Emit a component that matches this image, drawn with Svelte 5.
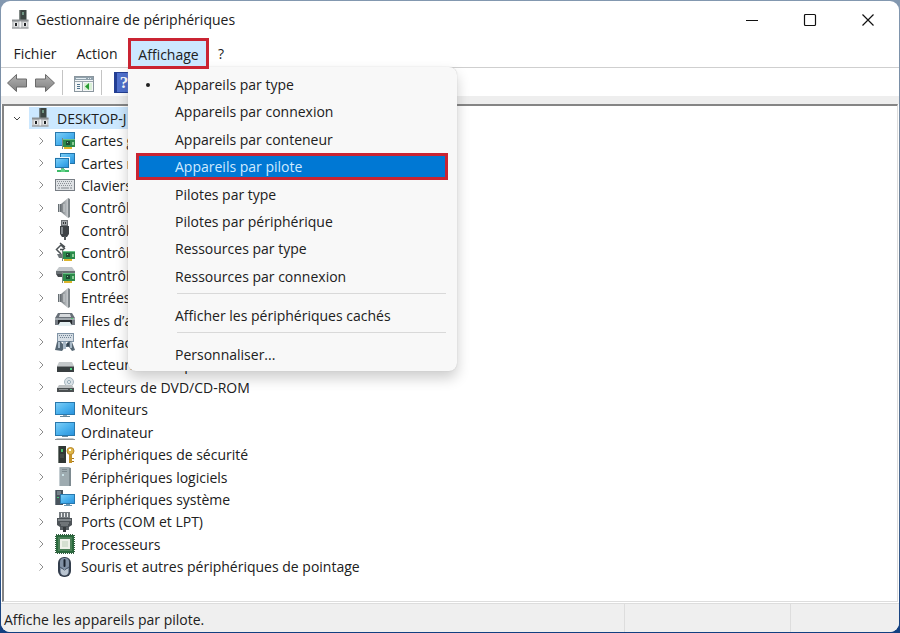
<!-- DeviceManager.svelte -->
<script lang="ts">
  interface Device {
    icon: string;
    label: string;
  }

  const devices: Device[] = [
    { icon: "display", label: "Cartes graphiques" },
    { icon: "network", label: "Cartes réseau" },
    { icon: "keyboard", label: "Claviers" },
    { icon: "speaker", label: "Contrôleurs audio" },
    { icon: "usb", label: "Contrôleurs USB" },
    { icon: "storage", label: "Contrôleurs" },
    { icon: "ide", label: "Contrôleurs IDE" },
    { icon: "speaker", label: "Entrées audio" },
    { icon: "printer", label: "Files d’attente" },
    { icon: "hid", label: "Interfaces" },
    { icon: "disk", label: "Lecteurs de disque" },
    { icon: "dvd", label: "Lecteurs de DVD/CD-ROM" },
    { icon: "monitor", label: "Moniteurs" },
    { icon: "computer", label: "Ordinateur" },
    { icon: "security", label: "Périphériques de sécurité" },
    { icon: "software", label: "Périphériques logiciels" },
    { icon: "system", label: "Périphériques système" },
    { icon: "ports", label: "Ports (COM et LPT)" },
    { icon: "cpu", label: "Processeurs" },
    { icon: "mouse", label: "Souris et autres périphériques de pointage" },
  ];

  const views = [
    "Appareils par type",
    "Appareils par connexion",
    "Appareils par conteneur",
    "Appareils par pilote",
    "Pilotes par type",
    "Pilotes par périphérique",
    "Ressources par type",
    "Ressources par connexion",
  ];

  let current = $state(0);
  let highlighted = $state(3);
</script>

<svelte:head>
  <title>Gestionnaire de périphériques</title>
</svelte:head>

{#snippet chip()}
  <path d="M9 9h12v8H9z" fill="#2c8a4b" />
  <path d="M9 9h12v1H9z" fill="#6cc088" />
  <rect x="12" y="11" width="4" height="4" fill="#1d4a33" />
  <path d="M13 12h1v1h-1z" fill="#8fd0a0" />
  <path d="M18 12h2v3h-2z" fill="#8ccf98" />
  <path d="M10 17h8v2h-8z" fill="#dcb52c" />
  <path d="M8 8h1v11H8z" fill="#7a8882" />
{/snippet}

{#snippet hub()}
  <svg class="icon" viewBox="0 0 22 22" aria-hidden="true">
    <rect x="10.500" y="1" width="7" height="10" fill="#3c4642" />
    <rect x="13" y="3" width="2" height="3" fill="#6f9482" />
    <path d="M10.500 1h1v10h-1z" fill="#68736e" />
    <path d="M3 11h16.500v8.500H3z" fill="#c6c8ca" />
    <path d="M3 10.500h16.500v2H3z" fill="#8b8f92" />
    <path d="M3 18.500h16.500v1H3z" fill="#8b8f92" />
    <path d="M10.500 12.500h1.500v6h-1.500z" fill="#f1f2f3" />
    <path d="M5 13.500h4v4H5zM14 13.500h4v4h-4z" fill="#eceded" />
    <path d="M6 14h2v3H6zM15 14h2v3h-2z" fill="#202326" />
  </svg>
{/snippet}

{#snippet deviceIcon(name: string)}
  <svg class="icon" viewBox="0 0 22 22" aria-hidden="true">
    {#if name === "display"}
      <rect x="1" y="2" width="20" height="14" fill="#2878ad" />
      <path d="M2 3h18v12H2z" fill="url(#screen)" />
      {@render chip()}
    {:else if name === "network"}
      <rect x="6" y="1" width="15" height="11" fill="#2375aa" />
      <rect x="7" y="2" width="13" height="9" fill="url(#screen)" />
      <rect x="1" y="5" width="15" height="11" fill="#f2f9fd" />
      <rect x="1" y="6" width="14" height="10" fill="#2375aa" />
      <rect x="2" y="7" width="12" height="8" fill="url(#screen)" />
      <path d="M7 16h3v2H7z" fill="#6fae86" />
      <path d="M3 18h12v2H3z" fill="#3dbb68" />
      <path d="M7 17h4v3H7z" fill="#62d488" />
    {:else if name === "keyboard"}
      <rect x="1" y="5" width="20" height="12" fill="#777d84" />
      <rect x="2" y="6" width="18" height="10" fill="#dfe2e5" />
      <path
        d="M3 7.500h16M4 9.500h14M3 11.500h16"
        stroke="#8a9096"
        stroke-dasharray="1 1"
      />
      <path d="M4 14h2M7 14h8M16 14h2" stroke="#81878d" />
    {:else if name === "speaker"}
      <path d="M4 7h4v8H4z" fill="#666d72" />
      <path d="M5 7h1v8H5z" fill="#b5babd" />
      <path d="M7 7l7-6v20l-7-6z" fill="url(#metal)" />
      <path d="M14 1l2 1v18l-2 1z" fill="#7f868a" />
      <path d="M10 7v8" stroke="#d2d5d7" />
    {:else if name === "usb"}
      <path d="M7 1h7v6H7z" fill="#6b7073" />
      <path d="M8 2h5v4H8z" fill="#a4a8aa" />
      <path d="M9 3h1v2H9zM11 3h1v2h-1z" fill="#35393b" />
      <path d="M6 7h9v8l-2 3H8l-2-3z" fill="#3e4346" />
      <path d="M7 8h2v7H7z" fill="#858b8f" />
      <path d="M10 17h2v4h-2z" fill="#555b5e" />
    {:else if name === "storage"}
      <path
        d="M11 7L7 3 2.500 7.500 7 12M6 1l5 4M6 7.500h4"
        fill="none"
        stroke="#4b5154"
        stroke-width="1.500"
      />
      <path d="M3 12h6v4H5z" fill="#6e7679" />
      {@render chip()}
    {:else if name === "ide"}
      <path d="M5 3h13l3 4H2z" fill="#c3c7ca" />
      <path d="M2 7h19v3H2z" fill="#6a7175" />
      <path d="M2 10h7v3H4z" fill="#43494c" />
      {@render chip()}
    {:else if name === "printer"}
      <path d="M4 4h14l3 5H1z" fill="#687078" />
      <path d="M6 5h10l1 3H5z" fill="#d6dadd" />
      <path d="M1 9h20v7H1z" fill="#737a81" />
      <path d="M1 9h20v2H1z" fill="#a0a7ad" />
      <path d="M4 11h14v4H4z" fill="#24292d" />
      <path d="M6 13h10l2 4H4z" fill="#e4eff1" />
      <path d="M17 9h2v1h-2z" fill="#57cb74" />
    {:else if name === "hid"}
      <rect x="3" y="2" width="17" height="9" fill="#8094a6" />
      <path d="M4 3h15v7H4z" fill="#d6dee5" />
      <path d="M5 4.500h13M6 6.500h11" stroke="#6f8293" stroke-dasharray="1 1" />
      <path d="M1 19l2-8 3-1 3 3h3l3-3 3 1 3 8-3 1-3-4h-4l-3 4z" fill="#566774" />
      <path d="M4 11h2v6H4zM9 11h3v7H9zM16 11h2v6h-2z" fill="#a7b8c6" />
      <path d="M13 12h2v3h-2z" fill="#334552" />
    {:else if name === "disk"}
      <path d="M5 8h13l2 4H3z" fill="#c5c9cb" />
      <rect x="3" y="12" width="17" height="6" fill="#393f41" />
      <path d="M3 12h17v1H3z" fill="#85898b" />
      <path d="M16 14h2v2h-2z" fill="#4fd080" />
    {:else if name === "dvd"}
      <circle cx="15" cy="6" r="4.500" fill="#dbe3e8" stroke="#a9b8c1" />
      <circle cx="15" cy="6" r="1.500" fill="#fff" stroke="#91a7b4" />
      <path d="M5 9h13l2 3H3z" fill="#bbbfc1" />
      <rect x="3" y="12" width="17" height="4" fill="#4b5052" />
      <path d="M5 13.500h9" stroke="#8d9294" />
      <path d="M16 13h2v1h-2z" fill="#67c791" />
    {:else if name === "monitor"}
      <rect x="1" y="3" width="20" height="13" fill="#2878ad" />
      <rect x="2" y="4" width="18" height="11" fill="url(#screen)" />
      <path d="M9 16h4v1H9z" fill="#8aa3b1" />
      <path d="M6 17h10v1H6z" fill="#64869a" />
    {:else if name === "computer"}
      <rect x="1" y="1" width="20" height="14" fill="#2878ad" />
      <rect x="2" y="2" width="18" height="12" fill="url(#screen)" />
      <path d="M8 15h6v1H8z" fill="#688ba2" />
      <path d="M3 17h16l2 2H1z" fill="#c4c9cd" />
      <path d="M1 18h20v1H1z" fill="#8f969b" />
    {:else if name === "security"}
      <rect x="4" y="2" width="8" height="17" fill="#303735" />
      <path d="M4 2h1v17H4z" fill="#747c77" />
      <path d="M7 5h2v3H7z" fill="#4cc16b" />
      <path d="M6 11h4M6 13h4" stroke="#555d59" />
      <path d="M15 10h3v9h-3z" fill="#c69427" />
      <circle cx="16.500" cy="7" r="3.500" fill="#dfb84b" stroke="#b8862b" />
      <path d="M15 5h2v2h-2z" fill="#fff" />
      <path d="M18 14h2v1h-2zM18 17h2v1h-2z" fill="#a8771d" />
    {:else if name === "software"}
      <path d="M6 1h9l2 1v18H5V2z" fill="#9eabb0" />
      <path d="M5 2h1v18H5z" fill="#c4cdd1" />
      <path d="M15 2h2v18h-2z" fill="#7e8b91" />
      <path d="M8 3.500h5M8 5.500h5" stroke="#7e8b91" />
      <path d="M8 8h2v2H8z" fill="#c9e1e6" />
    {:else if name === "system"}
      <path d="M1 2h8v15H1z" fill="#49545d" />
      <path d="M1 2h1v15H1z" fill="#7a868e" />
      <path d="M3 4h4M3 6h4" stroke="#a4afb6" />
      <path d="M3 9h2v1H3z" fill="#45cc78" />
      <rect x="6" y="6" width="15" height="10" fill="#2878ad" />
      <rect x="7" y="7" width="13" height="8" fill="url(#screen)" />
      <path d="M12 16h4v1h-4zM10 17h8v1h-8z" fill="#6a96b1" />
    {:else if name === "ports"}
      <path d="M5 1h11v6H5z" fill="#777d81" />
      <path d="M7.500 2v4M10.500 2v4M13.500 2v4" stroke="#eef0f1" />
      <path d="M3 7h15v7l-3 2H6l-3-2z" fill="#4d5357" />
      <path d="M4 8h13v2H4z" fill="#81878b" />
      <path d="M6 12h9M7 14h7" stroke="#92979a" />
      <path d="M6 16h3v3H6zM12 16h3v3h-3z" fill="#5b6165" />
      <path d="M9 16h3v5H9z" fill="#353a3d" />
    {:else if name === "cpu"}
      <rect
        x="2"
        y="2"
        width="18"
        height="18"
        fill="#286c3c"
        stroke="#315f40"
        stroke-width="2"
        stroke-dasharray="1 1"
      />
      <rect x="4" y="4" width="14" height="14" fill="#4b8058" />
      <rect x="6" y="6" width="10" height="10" fill="#eef0e9" />
      <path d="M8 8h6v6H8z" fill="#d5dfd1" />
    {:else if name === "mouse"}
      <rect x="4" y="1" width="13" height="20" rx="6" fill="#343e4d" />
      <rect x="6" y="2" width="9" height="17" rx="4" fill="#8090a4" />
      <path d="M7 13h7v3a3 3 0 0 1-7 0z" fill="#bac5d1" />
      <rect x="9.500" y="3" width="2" height="8" rx="1" fill="#19212d" />
      <path d="M6 11l4.500 3 4.500-3" fill="none" stroke="#48566a" />
    {/if}
  </svg>
{/snippet}

<svg class="defs" aria-hidden="true">
  <defs>
    <linearGradient id="screen" x1="0" y1="0" x2="1" y2="1">
      <stop offset="0" stop-color="#7ccdf6" />
      <stop offset="0.5" stop-color="#4bb2ee" />
      <stop offset="1" stop-color="#2a93dd" />
    </linearGradient>
    <linearGradient id="metal">
      <stop offset="0" stop-color="#73797d" />
      <stop offset="1" stop-color="#c8cccf" />
    </linearGradient>
    <linearGradient id="arrow" x1="0" y1="0" x2="0" y2="1">
      <stop offset="0" stop-color="#b3b3b3" />
      <stop offset="1" stop-color="#808080" />
    </linearGradient>
  </defs>
</svg>

<div class="desktop">
  <main class="window">
    <header class="titlebar">
      {@render hub()}
      <h1>Gestionnaire de périphériques</h1>
      <div class="caption">
        <button aria-label="Réduire">
          <svg viewBox="0 0 14 14"><path d="M1 7.5h12" /></svg>
        </button>
        <button aria-label="Agrandir">
          <svg viewBox="0 0 14 14"><rect x="1.500" y="1.500" width="11" height="11" rx="1" /></svg>
        </button>
        <button aria-label="Fermer">
          <svg viewBox="0 0 14 14"><path d="M1.500 1.500l11 11M12.500 1.500l-11 11" /></svg>
        </button>
      </div>
    </header>

    <nav class="menubar">
      <button class="file">Fichier</button>
      <button class="action">Action</button>
      <div class="dropdown">
        <button class="view" aria-expanded="true">Affichage</button>
        <div class="menu" role="menu">
          <div class="views">
            {#each views as view, i}
              <button
                role="menuitemradio"
                aria-checked={i === current}
                class:highlighted={i === highlighted}
                onmouseenter={() => (highlighted = i)}
                onclick={() => (current = i)}
              >
                <span class="mark" class:checked={i === current}></span>{view}
              </button>
            {/each}
          </div>
          <hr />
          <button role="menuitem">
            <span class="mark"></span>Afficher les périphériques cachés
          </button>
          <hr />
          <button role="menuitem"><span class="mark"></span>Personnaliser...</button>
        </div>
      </div>
      <button class="help">?</button>
    </nav>

    <div class="toolbar">
      <button aria-label="Précédent">
        <svg viewBox="0 0 22 22">
          <path d="M1.500 11l9-8.500v4.500h10v8h-10v4.500z" fill="url(#arrow)" stroke="#6b6b6b" />
        </svg>
      </button>
      <button aria-label="Suivant">
        <svg viewBox="0 0 22 22">
          <path d="M20.500 11l-9-8.500v4.500h-10v8h10v4.500z" fill="url(#arrow)" stroke="#6b6b6b" />
        </svg>
      </button>
      <span class="divider"></span>
      <button aria-label="Afficher l’arborescence">
        <svg viewBox="0 0 22 22">
          <rect x="1.500" y="4.500" width="19" height="15" fill="#f4f6f7" stroke="#8a969e" />
          <path d="M2 5h18v3H2z" fill="#91a2ad" />
          <path d="M3 6h10v1H3zM15 6h1v1h-1zM17 6h1v1h-1z" fill="#e4edf2" />
          <path d="M2 9.500h18M9.500 9v10" stroke="#9aa6ad" />
          <path d="M4 12.500h3M4 14.500h3M4 16.500h3" stroke="#50748d" />
          <path d="M11 11h8v7h-8z" fill="#d9f0d6" />
          <path d="M16 11v7l-4-3.500z" fill="#279c31" />
        </svg>
      </button>
      <span class="divider"></span>
      <button aria-label="Aide">
        <svg viewBox="0 0 22 22">
          <rect x="2" width="19" height="21" fill="#243f94" />
          <rect x="5" y="1" width="15" height="19" fill="#4f70cd" />
          <text x="12" y="16" text-anchor="middle">?</text>
        </svg>
      </button>
    </div>

    <ul class="tree">
      <li class="root">
        <svg class="chevron" viewBox="0 0 10 10"><path d="M2 4l3 3 3-3" /></svg>
        <span class="node">{@render hub()}DESKTOP-J</span>
      </li>
      {#each devices as device}
        <li>
          <svg class="chevron" viewBox="0 0 10 10"><path d="M3.500 1.500l3.500 3.500-3.500 3.500" /></svg>
          {@render deviceIcon(device.icon)}
          <span class="label">{device.label}</span>
        </li>
      {/each}
    </ul>

    <footer class="status">
      <span class="message">Affiche les appareils par pilote.</span>
      <span></span>
      <span></span>
    </footer>
  </main>
</div>

<style>
  :global(body) {
    margin: 0;
  }

  .defs {
    position: absolute;
    width: 0;
    height: 0;
  }

  .desktop {
    box-sizing: border-box;
    height: 100vh;
    padding: 1px;
    background: linear-gradient(#8398b0, #66798f 45%, #4a688f 80%, #123f80);
    font-family: "Open Sans", "Noto Sans", sans-serif;
    font-size: 14px;
    color: #202020;
  }

  .window {
    box-sizing: border-box;
    height: 100%;
    display: flex;
    flex-direction: column;
    overflow: hidden;
    border-radius: 9px;
    background: #fff;
  }

  button {
    margin: 0;
    padding: 0;
    border: 0;
    background: none;
    font: inherit;
    color: inherit;
    white-space: nowrap;
  }

  .icon {
    flex: none;
    width: 22px;
    height: 22px;
  }

  .titlebar {
    display: flex;
    align-items: center;
    height: 37px;
    padding: 0 2px 0 8px;
  }

  h1 {
    flex: 1;
    margin: 0 0 0 5px;
    font-size: 14px;
    font-weight: normal;
  }

  .caption {
    display: flex;
  }

  .caption button {
    display: grid;
    place-items: center;
    width: 58px;
    height: 37px;
  }

  .caption svg {
    width: 14px;
    height: 14px;
    fill: none;
    stroke: #111;
    stroke-width: 1.2;
  }

  .menubar {
    display: flex;
    height: 28px;
    padding-top: 1px;
    border-bottom: 1px solid #cfcfcf;
  }

  .menubar > button {
    padding-top: 1px;
  }

  .file {
    width: 68px;
  }

  .action {
    width: 56px;
  }

  .dropdown {
    position: relative;
    margin-left: 3px;
  }

  .view {
    position: relative;
    z-index: 2;
    width: 81px;
    height: 31px;
    margin-top: -1px;
    padding-top: 2px;
    border: 3px solid #ca2432;
    background: #cce8ff;
  }

  .help {
    width: 24px;
  }

  .menu {
    position: absolute;
    z-index: 1;
    top: 28px;
    left: 0;
    box-sizing: border-box;
    width: 329px;
    padding: 4px 9px 3px 8px;
    border-radius: 0 8px 8px 8px;
    background: #f8f8f8;
    box-shadow: 0 0 1px #bbb, 0 7px 14px rgb(0 0 0 / 20%);
  }

  .views {
    display: grid;
    grid-auto-rows: 1fr;
    height: 219px;
  }

  .menu button {
    display: flex;
    align-items: center;
    width: 100%;
    height: 27px;
  }

  .menu .highlighted {
    outline: 3px solid #ca2432;
    outline-offset: -3px;
    background: #0078d4;
    color: #cfeaff;
  }

  .mark {
    width: 39px;
  }

  .checked::before {
    content: "";
    display: block;
    width: 4px;
    height: 4px;
    margin-left: 10px;
    border-radius: 2px;
    background: #202020;
  }

  hr {
    height: 1px;
    margin: 3px 2px 8px 41px;
    border: 0;
    background: #d9d9d9;
  }

  .toolbar {
    display: flex;
    align-items: center;
    height: 27px;
    padding: 1px 5px 0;
    border-bottom: 8px solid #eee;
  }

  .toolbar button {
    width: 22px;
    height: 22px;
    margin-right: 6px;
  }

  .toolbar svg {
    display: block;
    width: 22px;
    height: 22px;
  }

  .toolbar text {
    font: bold 17px "Liberation Serif", serif;
    fill: #fff;
  }

  .divider {
    width: 1px;
    height: 25px;
    margin: 0 10px 0 0;
    background: #c4c4c4;
  }

  .tree {
    flex: 1;
    display: grid;
    grid-auto-rows: 1fr;
    margin: 0 1px;
    padding: 1px 0 23px;
    border: 1px solid #ddd;
    border-top: 2px solid #858585;
    border-left: 2px solid #858585;
    list-style: none;
    white-space: nowrap;
  }

  li {
    display: flex;
    align-items: center;
    padding-left: 32px;
  }

  .root {
    padding-left: 8px;
  }

  .node {
    display: flex;
    align-items: center;
    height: 22px;
    margin-left: 7px;
    padding-right: 48px;
    background: #cce8ff;
  }

  .node .icon {
    margin-right: 6px;
  }

  .chevron {
    flex: none;
    width: 10px;
    height: 10px;
    fill: none;
    stroke: #8d8d8d;
  }

  .root .chevron {
    stroke: #444;
  }

  li > .icon {
    margin-left: 8px;
  }

  .label {
    margin-left: 5px;
  }

  .status {
    display: flex;
    height: 28px;
    margin-top: 1px;
    border-top: 1px solid #ddd;
    background: #efefef;
    line-height: 32px;
  }

  .status span {
    width: 108px;
    border-left: 1px solid #ddd;
  }

  .status span:nth-child(2) {
    width: 165px;
  }

  .status .message {
    flex: 1;
    padding-left: 3px;
    border: 0;
  }
</style>
